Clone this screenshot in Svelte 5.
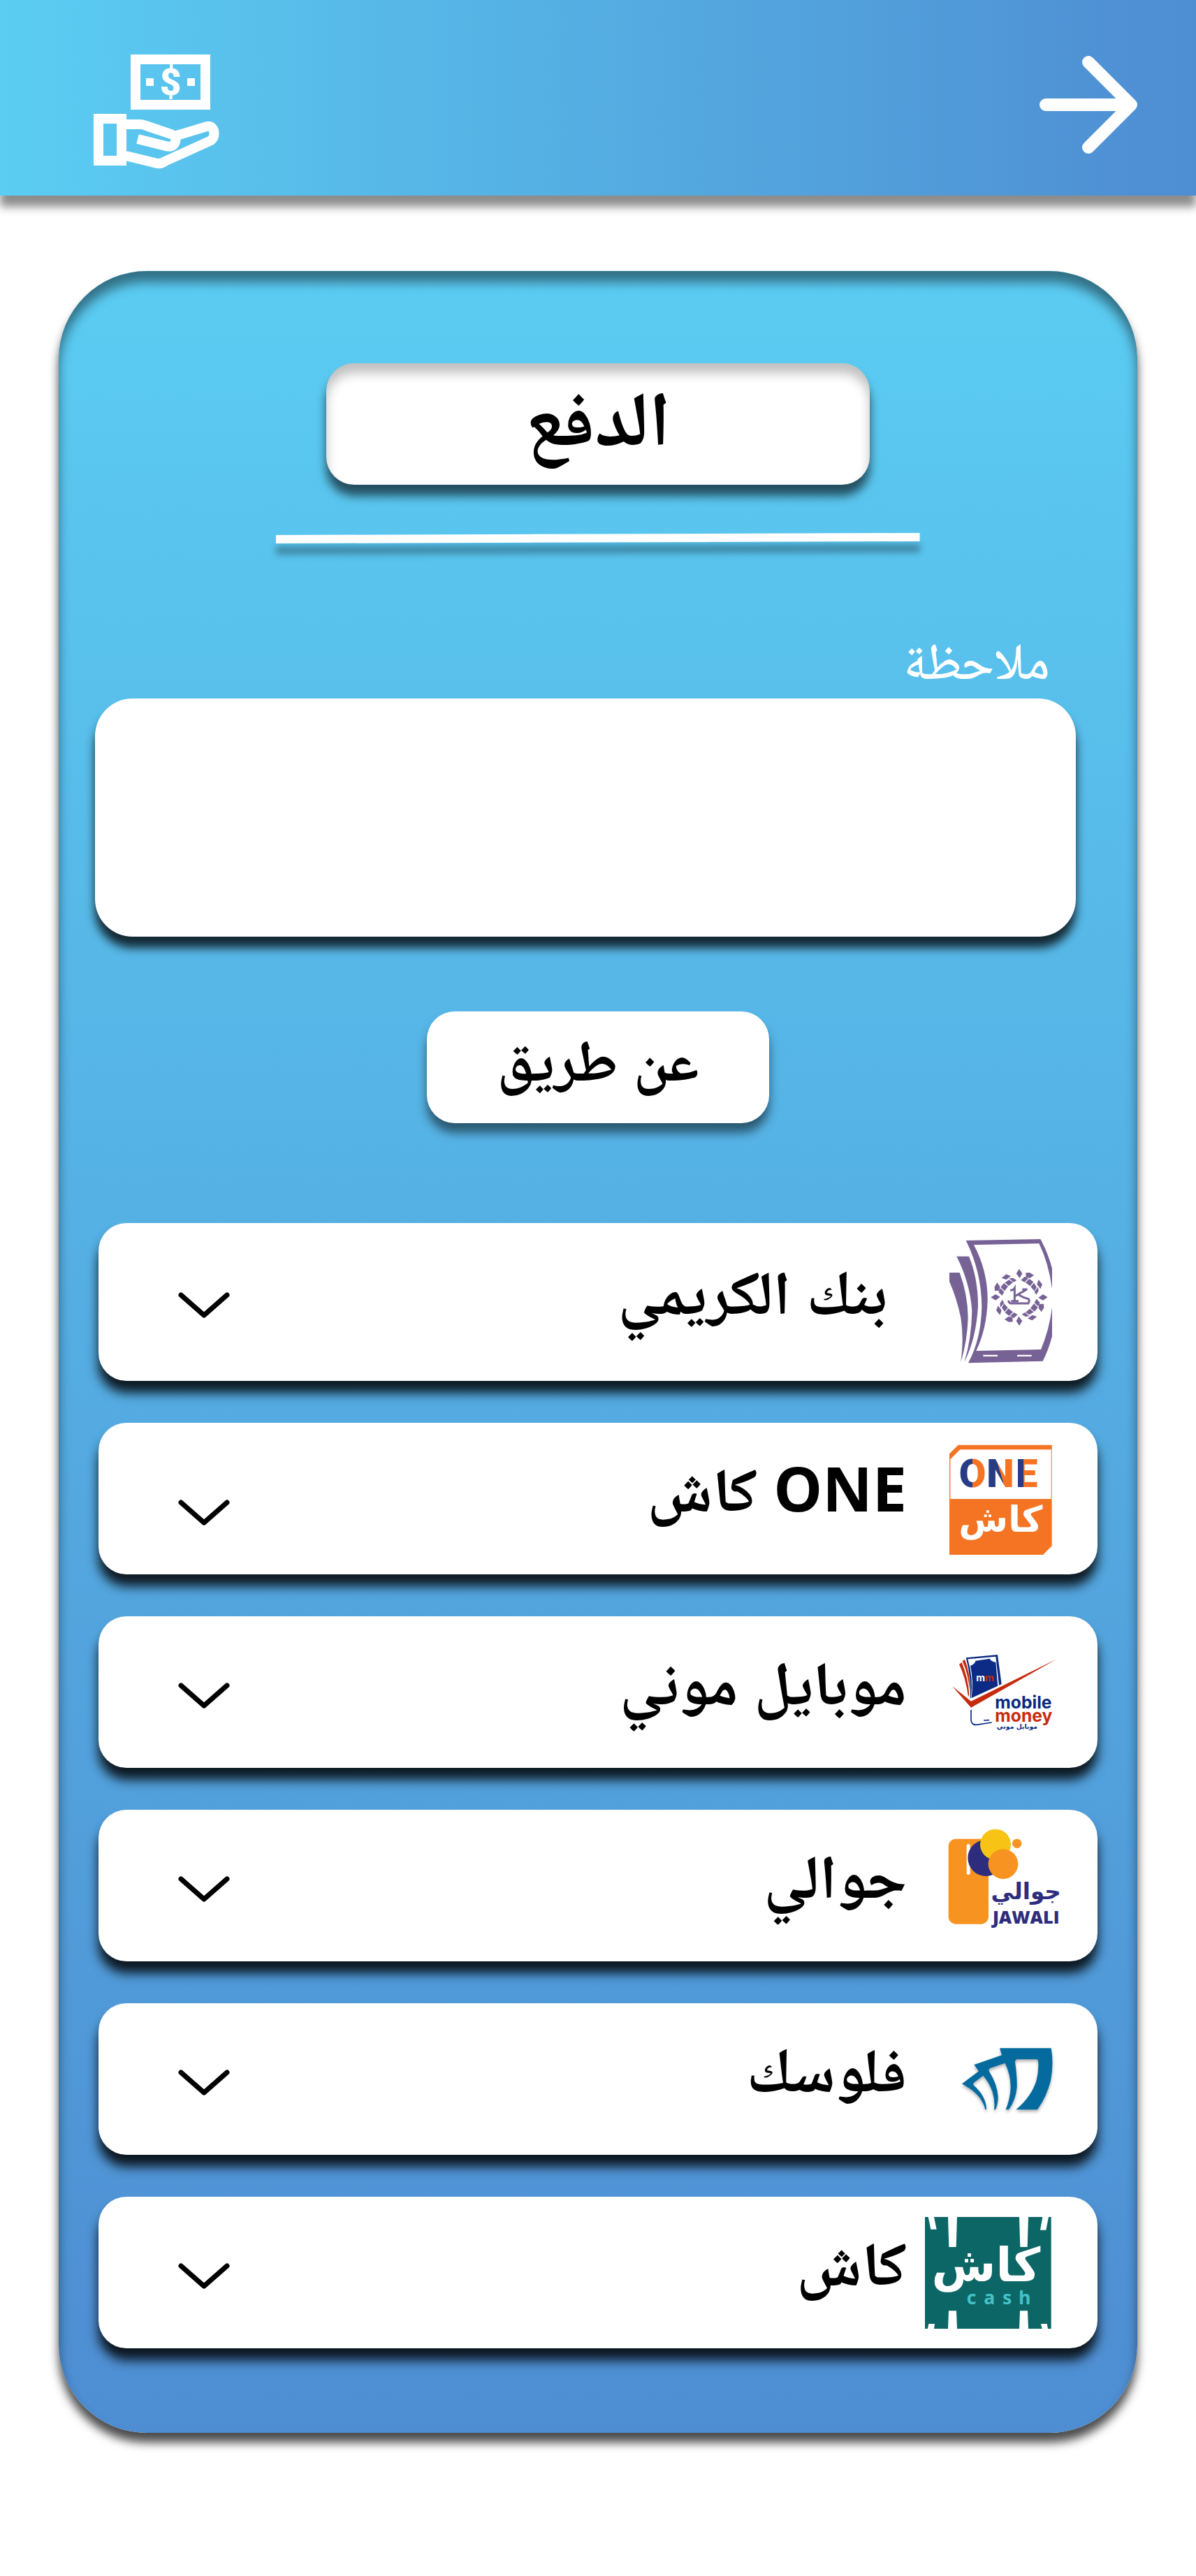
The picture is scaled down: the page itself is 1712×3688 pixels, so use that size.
<script>
  const methods = [
    { id: 'kuraimi', name: 'بنك الكريمي', tall: true },
    { id: 'one', name: 'ONE كاش', low: true },
    { id: 'mobile', name: 'موبايل موني' },
    { id: 'jawali', name: 'جوالي' },
    { id: 'floosak', name: 'فلوسك' },
    { id: 'cash', name: 'كاش' }
  ];
  const wreath = [0, 90, 180, 270];
  let note = $state('');
  let selected = $state('');
</script>

<header class="bar">
  <svg class="pay" viewBox="134 58 180 184" aria-hidden="true">
    <path d="M187 78h114v79H187zM201 92v51h86V92z" fill="#fff" fill-rule="evenodd" />
    <path d="M209 112h11v11h-11zM268 112h11v11h-11z" fill="#fff" />
    <text x="244" y="136" text-anchor="middle" font-size="53" font-weight="900" fill="#fff">$</text>
    <path d="M134 163h47v74h-47zM148 177v46h19v-46z" fill="#fff" fill-rule="evenodd" />
    <g fill="none" stroke="#fff" stroke-width="14">
      <path d="M180 178H201Q205 178 209 180L245 192Q253 195 251 203Q248 212 237 209L197 199" />
      <path d="M253 194L293 182Q303 178 306 187Q308 196 302 201L236 231Q229 236 221 233L180 223" />
    </g>
  </svg>
  <button class="back" type="button" aria-label="رجوع">
    <svg viewBox="1488 80 140 140" aria-hidden="true">
      <path d="M1497 150H1618M1558 89L1619 150L1558 211" fill="none" stroke="#fff" stroke-width="18" stroke-linecap="round" stroke-linejoin="round" />
    </svg>
  </button>
</header>

<main dir="rtl">
  <section class="card">
    <h1>الدفع</h1>
    <svg class="rule" viewBox="0 0 920 16" preserveAspectRatio="none" aria-hidden="true">
      <path d="M0 3L920 0V12L0 15Z" fill="#fff" />
    </svg>
    <div class="field">
      <label for="note">ملاحظة</label>
      <textarea id="note" bind:value={note}></textarea>
    </div>
    <h2>عن طريق</h2>
    <div class="methods">
      {#each methods as m}
        <button type="button" class="method" class:tall={m.tall} class:low={m.low}
          aria-expanded={selected === m.id} onclick={() => (selected = selected === m.id ? '' : m.id)}>
          {#if m.id === 'kuraimi'}
            <svg class="logo" viewBox="372 126 588 552" aria-hidden="true">
              <g fill="#776296">
                <path fill-rule="evenodd" d="M548 138L868 132Q900 190 918 258V345Q903 235 862 151L582 157Q642 270 641 395Q638 515 592 612L870 606Q906 520 918 425V550Q902 610 878 656L558 664Q614 560 616 420Q614 270 548 138Z" />
                <path d="M508 206H561Q600 300 600 420Q592 560 541 660Q572 560 574 440Q566 320 508 206Z" />
                <path d="M477 276H521Q556 370 557 470Q554 570 526 660Q540 560 526 470Q510 390 477 314Z" />
                {#each wreath as a}
                  <g transform="rotate({a} 777 382)">
                    <path d="M777 260L790 280L779 300L764 280Z" />
                    <path d="M805 277L822 276L840 287L824 299L806 297Z" />
                    <path d="M853 326L860 306L876 326L868 346Z" />
                    <path d="M784 308L800 293L816 301L800 317ZM804 319L820 302L838 316L824 334ZM826 337L840 320L852 338L842 355ZM842 358L858 338L860 355L850 371Z" />
                  </g>
                {/each}
              </g>
              <g fill="none" stroke="#776296" stroke-width="9">
                <path d="M738 352Q752 352 757 343V398M742 398H774M757 378L806 350M774 371Q794 383 816 389Q823 396 816 408H742Q734 408 730 396" />
                <path d="M790 348H812" />
              </g>
              <path d="M622 629h62v7h-62zM768 629h62v7h-62z" fill="#fff" />
            </svg>
          {:else if m.id === 'one'}
            <svg class="logo" viewBox="372 74 588 552" aria-hidden="true">
              <defs>
                <linearGradient id="letterO"><stop offset=".5" stop-color="#263c84" /><stop offset=".5" stop-color="#f47424" /></linearGradient>
                <linearGradient id="letterN" x1=".2" y1=".7" x2=".8" y2=".4"><stop offset=".55" stop-color="#263c84" /><stop offset=".55" stop-color="#f47424" /></linearGradient>
                <linearGradient id="letterE"><stop offset=".36" stop-color="#263c84" /><stop offset=".36" stop-color="#f47424" /></linearGradient>
              </defs>
              <path d="M477 156L515 118H917V552L879 590H477Z" fill="#f47424" />
              <path d="M481 180L523 138H914V350H481Z" fill="#fff" />
              <g font-size="168" font-weight="900" class="narrow">
                <text x="518" y="300" fill="url(#letterO)">O</text>
                <text x="637" y="300" fill="url(#letterN)">N</text>
                <text x="762" y="300" fill="url(#letterE)">E</text>
              </g>
              <text x="697" y="490" text-anchor="middle" font-size="154" font-weight="700" fill="#fff" class="ar">كاش</text>
            </svg>
          {:else if m.id === 'mobile'}
            <svg class="logo" viewBox="72 5 588 552" aria-hidden="true">
              <path d="M248 132L384 119L401 246L390 250L376 127L256 138Q280 220 270 302L266 308Q272 220 248 132Z" fill="#0a2a82" />
              <path d="M267 166Q284 162 290 145L350 136Q358 150 376 151L385 253L272 305Q281 230 267 166Z" fill="#0d2b84" />
              <g fill="#c52b0c">
                <path d="M219 160L230 152Q258 220 262 290L258 300Q248 220 219 160Z" />
                <path d="M233 146L243 140Q268 200 265 280Q258 200 233 146Z" />
                <path d="M189 254L270 319L638 138L270 346Z" />
              </g>
              <path d="M270 356V400Q272 422 294 420L359 410M324 401L348 400" fill="none" stroke="#0a2a82" stroke-width="5" />
              <g font-weight="700" class="round">
                <text x="292" y="233" font-size="42" fill="#fff">m<tspan fill="#c52b0c">m</tspan></text>
                <text x="373" y="351" font-size="74" fill="#0a2a82">mobile<tspan x="373" y="407" fill="#c52b0c">money</tspan></text>
              </g>
              <text x="468" y="436" text-anchor="middle" font-size="28" font-weight="700" fill="#0a2a82" class="ar">موبايل موني</text>
            </svg>
          {:else if m.id === 'jawali'}
            <svg class="logo" viewBox="72 58 588 552" aria-hidden="true">
              <rect x="173" y="132" width="172" height="366" rx="32" fill="#f79421" />
              <rect x="251" y="154" width="15" height="132" rx="7" fill="#fff" />
              <circle cx="334" cy="214" r="78" fill="#2e2c7c" />
              <circle cx="375" cy="156" r="66" fill="#f7c416" />
              <circle cx="408" cy="240" r="64" fill="#f79421" />
              <circle cx="467" cy="152" r="20" fill="#f79421" />
              <text x="506" y="390" text-anchor="middle" font-size="98" font-weight="700" fill="#2e2c7c" class="ar">جوالي</text>
              <text x="506" y="497" text-anchor="middle" font-size="76" font-weight="800" fill="#2e2c7c" class="brand">JAWALI</text>
            </svg>
          {:else if m.id === 'floosak'}
            <svg class="logo soft" viewBox="72 20 588 552" aria-hidden="true">
              <path fill="#056b9f" fill-rule="evenodd" d="M393 162H614Q626 230 612 302Q594 372 555 426H463Q530 370 551 300Q562 255 558 215Q556 210 550 210H468Q460 212 459 222Q468 280 467 330Q462 385 432 426H419Q438 380 440 330Q440 275 416 226L352 248Q344 252 348 262Q382 315 386 370Q386 400 375 426H369Q374 390 362 350Q350 312 322 280L282 310Q278 315 281 321Q336 370 336 426H331Q318 370 262 334Q246 324 231 315L303 261L283 233L402 192Z" />
            </svg>
          {:else}
            <svg class="logo" viewBox="132 78 588 552" aria-hidden="true">
              <path d="M132 114H674V594H132Z" fill="#0c6666" />
              <path fill="#fff" d="M146 114H171L182 167H157ZM231 114H270L266 243H235ZM537 114H576L572 243H541ZM637 114H663L652 170H627ZM234 517H267L270 594H231ZM540 517H573L576 594H537ZM148 573H174L171 594H144ZM630 573H656L660 594H635Z" />
              <text x="394" y="390" text-anchor="middle" font-size="200" font-weight="700" fill="#fff" class="ar">كاش</text>
              <g font-size="80" font-weight="700" fill="#45c2c8" class="brand">
                <text x="311" y="488">c</text><text x="385" y="488">a</text><text x="465" y="488">s</text><text x="534" y="488">h</text>
              </g>
            </svg>
          {/if}
          <span class="name">{m.name}</span>
          <svg class="chevron" viewBox="0 0 76 40" aria-hidden="true">
            <path d="M5 5L38 34L71 5" fill="none" stroke="#000" stroke-width="7" stroke-linecap="round" stroke-linejoin="round" />
          </svg>
        </button>
      {/each}
    </div>
  </section>
</main>

<style>
  :global(body) {
    background: #fff;
    font-family: "Open Sans", "Noto Naskh Arabic", "DejaVu Sans", sans-serif;
  }
  svg { direction: ltr; }
  .bar {
    display: flex;
    justify-content: space-between;
    align-items: center;
    box-sizing: border-box;
    height: 280px;
    padding: 20px 84px 0 134px;
    background: linear-gradient(90deg, #5bcdf2, #4e8dd2);
    box-shadow: 0 16px 12px rgba(0, 0, 0, .45);
  }
  .pay { width: 180px; height: 184px; font-family: Roboto, sans-serif; }
  .back { padding: 0; border: 0; background: none; cursor: pointer; }
  .back svg { display: block; width: 140px; height: 140px; }
  main { padding: 108px 84px 204px; }
  .card {
    display: flex;
    flex-direction: column;
    align-items: center;
    padding: 132px 52px 121px;
    border-radius: 126px;
    background: linear-gradient(#5bccf2, #4e8dd2);
    box-shadow: inset 0 16px 16px rgba(0, 0, 0, .45), 0 14px 14px rgba(0, 0, 0, .7);
  }
  h1, h2 {
    display: flex;
    justify-content: center;
    align-items: center;
    box-sizing: border-box;
    margin: 0;
    padding-bottom: 24px;
    border-radius: 40px;
    background: #fff;
    color: #000;
  }
  h1 {
    width: 54%;
    height: 174px;
    font-size: 110px;
    line-height: 140px;
    box-shadow: inset 0 14px 16px rgba(0, 0, 0, .25), 0 16px 14px rgba(0, 0, 0, .6);
  }
  h2 {
    width: 34%;
    height: 160px;
    margin-top: 107px;
    font-size: 84px;
    line-height: 120px;
    box-shadow: 0 14px 14px rgba(0, 0, 0, .5);
  }
  .rule {
    width: 64%;
    height: 16px;
    margin-top: 69px;
    overflow: visible;
    filter: drop-shadow(0 16px 5px rgba(0, 0, 0, .3));
  }
  .field {
    display: flex;
    flex-direction: column;
    align-self: stretch;
    gap: 16px;
    margin-top: 125px;
    padding-right: 36px;
  }
  label {
    padding-right: 37px;
    color: #fff;
    font-size: 74px;
    font-weight: 500;
    line-height: 80px;
  }
  textarea {
    box-sizing: border-box;
    width: 100%;
    height: 341px;
    padding: 40px;
    border: 0;
    border-radius: 54px;
    background: #fff;
    font: inherit;
    font-size: 56px;
    resize: none;
    box-shadow: 0 16px 14px rgba(0, 0, 0, .78);
  }
  .methods {
    display: flex;
    flex-direction: column;
    align-self: stretch;
    gap: 60px;
    margin-top: 143px;
    padding: 0 5px;
  }
  .method {
    display: flex;
    align-items: center;
    box-sizing: border-box;
    height: 217px;
    padding: 0 51px 0 113px;
    border: 0;
    border-radius: 40px;
    background: #fff;
    color: #000;
    font: inherit;
    font-size: 88px;
    font-weight: 700;
    cursor: pointer;
    box-shadow: 0 17px 16px rgba(0, 0, 0, .85);
  }
  .tall { height: 226px; }
  .logo { flex: none; width: 196px; height: 184px; }
  .soft { filter: drop-shadow(0 3px 2px rgba(0, 0, 0, .3)); }
  .name { flex: 1; margin-bottom: 32px; padding-right: 26px; text-align: right; line-height: 120px; }
  .tall .name { padding-right: 54px; }
  .chevron { flex: none; width: 76px; height: 40px; margin-top: 10px; }
  .low .chevron { margin-top: 40px; }
  .brand { font-family: "Open Sans", sans-serif; }
  .narrow { font-family: Roboto, sans-serif; }
  .round { font-family: "Inter", sans-serif; }
  .ar { font-family: "DejaVu Sans", sans-serif; }
</style>
